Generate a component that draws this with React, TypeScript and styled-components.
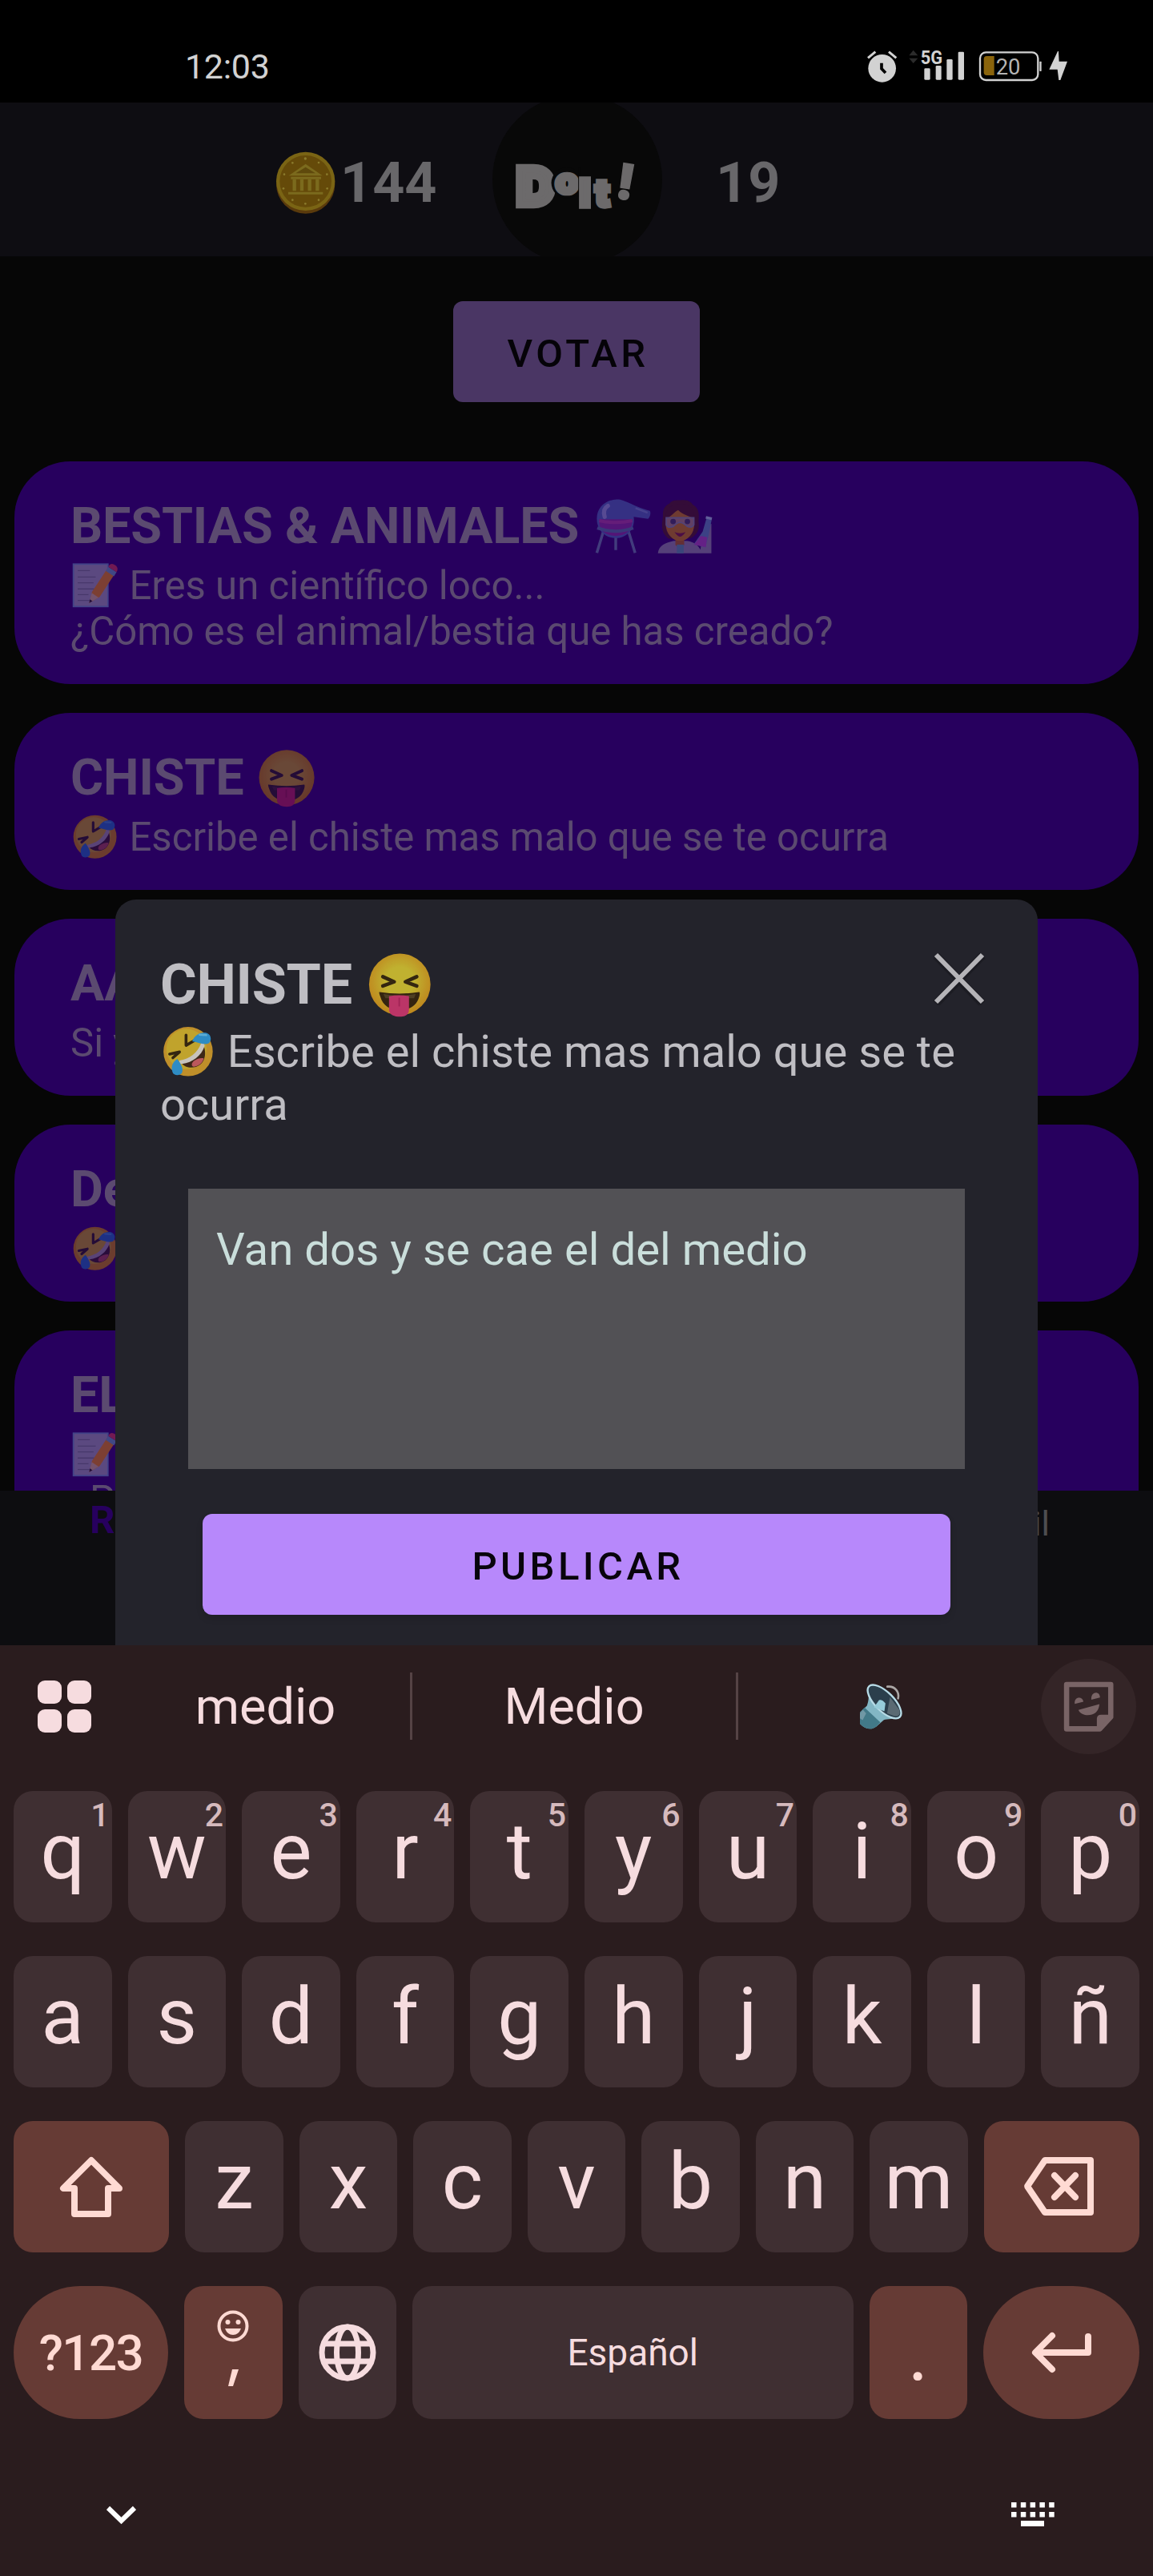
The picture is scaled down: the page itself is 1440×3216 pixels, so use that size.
import React from "react";
import styled, { createGlobalStyle } from "styled-components";

const GlobalStyle = createGlobalStyle`
  * { box-sizing: border-box; }
  body { margin: 0; background: #000; }
  button { border: 0; padding: 0; margin: 0; font-family: inherit; }
  h1, h2, p { margin: 0; }
`;

const Screen = styled.div`
  position: relative;
  width: 1440px;
  height: 3216px;
  overflow: hidden;
  display: flex;
  flex-direction: column;
  background: #060606;
  font-family: Roboto, "Noto Sans", sans-serif;
`;

/* ---------- status bar ---------- */

const StatusBar = styled.header`
  flex: 0 0 128px;
  display: flex;
  justify-content: space-between;
  padding: 57px 100px 0 231px;
  background: #000;
  color: #d2d2d2;
`;

const Clock = styled.span`
  font-size: 43px;
  line-height: 52px;
  letter-spacing: -0.3px;
`;

const StatusIcons = styled.div`
  display: flex;
  padding-top: 3px;
  svg { display: block; height: 45px; overflow: visible; }
`;

const AlarmIcon = () => (
  <svg width="40" height="45" viewBox="97 60 120 135">
    <circle cx="156" cy="136" r="52" fill="#d2d2d2" />
    <path d="M103 97L131 74M209 97L181 74" stroke="#d2d2d2" strokeWidth="9" />
    <path d="M154 116V137L169 153" fill="none" stroke="#000" strokeWidth="11" />
  </svg>
);

const SignalIcon = () => (
  <svg width="86" height="45" viewBox="217 60 258 135">
    <path d="M257 88L273 68L290 88zM257 98H290L273 117z" fill="#2b2b2b" />
    <rect x="314" y="136" width="22" height="43" rx="4" fill="#d2d2d2" />
    <rect x="357" y="126" width="21" height="53" rx="4" fill="#d2d2d2" />
    <rect x="398" y="102" width="22" height="77" rx="4" fill="#d2d2d2" />
    <rect x="441" y="74" width="22" height="105" rx="4" fill="#d2d2d2" />
    <text x="300" y="120" fontSize="74" fontWeight="700" textLength="82" lengthAdjust="spacingAndGlyphs" fill="#d2d2d2" stroke="#000" strokeWidth="3" paintOrder="stroke">5G</text>
  </svg>
);

const BatteryIcon = () => (
  <svg width="96" height="45" viewBox="475 60 288 135">
    <rect x="523" y="76" width="217" height="104" rx="22" fill="none" stroke="#d2d2d2" strokeWidth="7" />
    <path d="M576 90H548Q537 90 537 102V151Q537 162 548 162H576z" fill="#8a640c" />
    <rect x="746" y="110" width="7" height="37" rx="2" fill="#d2d2d2" />
    <text x="582" y="159" fontSize="82" fill="#b4b4b4">20</text>
  </svg>
);

const BoltIcon = () => (
  <svg width="36" height="45" viewBox="763 60 108 135">
    <path d="M814 72L782 140H813L818 180H824L850 110H819L817 72z" fill="#d2d2d2" />
  </svg>
);

/* ---------- app header ---------- */

const AppHeader = styled.div`
  flex: 0 0 192px;
  display: flex;
  align-items: center;
  overflow: hidden;
  padding-left: 340px;
  background: #0e0d12;
  color: #68676a;
`;

const Counter = styled.span<{ $width: number }>`
  width: ${(p) => p.$width}px;
  font-size: 70px;
  font-weight: 700;
  line-height: 82px;
  padding-top: 7px;
`;

const LogoDisc = styled.div`
  flex: 0 0 212px;
  height: 212px;
  margin-right: 67px;
  border-radius: 50%;
  background: #080808;
  display: flex;
  align-items: center;
  justify-content: center;
  padding: 12px 3px 0 0;
  svg { overflow: visible; }
`;

const CoinDrawing = styled.svg`
  margin: 7px 1px 0 0;
`;

const Coin = () => (
  <CoinDrawing width="84" height="84" viewBox="60 48 252 252">
    <circle cx="185" cy="180" r="110" fill="#5a3a0c" />
    <circle cx="185" cy="169" r="110" fill="#7a6414" />
    <circle cx="185" cy="169" r="97" fill="#654a09" />
    <path d="M122 148L185 104L248 148z" fill="#7b6a1d" />
    <path d="M148 139L185 116L222 139z" fill="#5f490c" />
    <path d="M130 157H243M120 214H250" stroke="#7b6a1d" strokeWidth="9" />
    <path d="M143 161V205M171 161V205M200 161V205M229 161V205" stroke="#7b6a1d" strokeWidth="13" />
    <g fill="#8a7a2c">
      <circle cx="184" cy="84" r="5" /><circle cx="136" cy="100" r="4" /><circle cx="234" cy="99" r="4" />
      <circle cx="105" cy="143" r="4" /><circle cx="265" cy="143" r="4" /><circle cx="102" cy="196" r="4" />
      <circle cx="266" cy="196" r="4" /><circle cx="136" cy="239" r="4" /><circle cx="234" cy="239" r="4" />
      <circle cx="184" cy="253" r="4" />
    </g>
  </CoinDrawing>
);

const Logo = () => (
  <svg width="153" height="65" viewBox="120 235 460 195" fontFamily="Inter, sans-serif" fontWeight="900">
    <g fill="#6c6a6b" stroke="#6c6a6b">
      <text x="127" y="408" fontSize="196" strokeWidth="25">D</text>
      <circle cx="315" cy="326" r="58" fill="#080808" stroke="none" />
      <text x="271" y="368" fontSize="138" textLength="89" lengthAdjust="spacingAndGlyphs" strokeWidth="14">o</text>
      <rect x="358" y="270" width="7" height="110" fill="#080808" stroke="none" />
      <text x="362" y="415" fontSize="146" strokeWidth="16">I</text>
      <text x="421" y="415" fontSize="142" strokeWidth="16">t</text>
      <text transform="translate(492 381) rotate(9)" fontSize="184" strokeWidth="4">!</text>
    </g>
  </svg>
);

/* ---------- feed ---------- */

const Feed = styled.main`
  flex: 0 0 1541px;
  overflow: hidden;
  display: flex;
  flex-direction: column;
  align-items: center;
  padding-top: 56px;
`;

const VoteButton = styled.button`
  flex: 0 0 126px;
  width: 308px;
  margin-bottom: 74px;
  padding: 4px 0 0 4px;
  border-radius: 12px;
  background: #4a3664;
  color: #050308;
  font-size: 49px;
  font-weight: 500;
  letter-spacing: 4.4px;
`;

const CardList = styled.div`
  display: flex;
  flex-direction: column;
  gap: 36px;
  width: 1404px;
`;

const Card = styled.article`
  padding: 43px 69px 37px 70px;
  border-radius: 70px;
  background: #27005e;
  color: #5b4a70;
`;

const CardTitle = styled.h2`
  font-size: 63px;
  line-height: 75px;
  font-weight: 700;
  letter-spacing: -0.15px;
  margin-bottom: 9px;
  white-space: nowrap;
`;

const CardBody = styled.p`
  font-size: 49.15px;
  line-height: 57px;
  white-space: pre-line;
`;

const Indented = styled.span`
  padding-left: 24px;
`;

/* ---------- emoji drawings ---------- */

const EmojiBox = styled.svg<{ $opacity?: number }>`
  width: 1.245em;
  height: 1.17em;
  margin: -6px 0 -3px;
  vertical-align: calc(-0.243em + 3px);
  overflow: visible;
  opacity: ${(p) => p.$opacity ?? 0.95};
`;

type EmojiProps = { dim?: boolean };

const Squint = ({ dim }: EmojiProps) => {
  const gradient = dim ? "squintFaceDim" : "squintFace";
  return (
    <EmojiBox viewBox="-2 0 136 128" $opacity={dim ? 0.75 : 0.95}>
      <defs>
        <radialGradient id={gradient} cx="50%" cy="45%" r="52%">
          <stop offset="0.45" stopColor={dim ? "#80602a" : "#c9b931"} />
          <stop offset="1" stopColor={dim ? "#7d4c1a" : "#c8901f"} />
        </radialGradient>
      </defs>
      <circle cx="64" cy="64" r="60" fill={`url(#${gradient})`} />
      <path d="M31 49L53 59L31 67M97 49L75 59L97 67" fill="none" stroke={dim ? "#23102a" : "#35270f"} strokeWidth="7" strokeLinecap="round" strokeLinejoin="round" />
      <path d="M24 79Q64 85 102 79Q104 80 102 88C97 106 83 114 64 114S31 106 26 88Q23 80 24 79z" fill={dim ? "#23102a" : "#35250f"} />
      <path d="M32 83Q64 88 95 83L92 91H36z" fill={dim ? "#301733" : "#514024"} />
      <path d="M43 87Q64 83 82 87V112C82 124 74 127 64 127S43 124 43 112z" fill={dim ? "#7d1453" : "#c4366b"} />
      <path d="M63 90V107" stroke={dim ? "#6a0f48" : "#a82658"} strokeWidth="3" />
    </EmojiBox>
  );
};

const Rofl = ({ dim }: EmojiProps) => (
  <EmojiBox viewBox="-4 0 136 128" $opacity={dim ? 0.75 : 0.95}>
    <circle cx="64" cy="64" r="60" fill={dim ? "#82501f" : "#c8952a"} />
    <circle cx="60" cy="58" r="49" fill={dim ? "#80602a" : "#c9aa2d"} />
    <path d="M59 24V49L81 36M19 70L43 65L27 79" fill="none" stroke={dim ? "#23102a" : "#35270f"} strokeWidth="7" strokeLinecap="round" strokeLinejoin="round" />
    <path d="M101 48C109 65 106 86 93 96S58 106 47 91C70 89 90 72 101 48z" fill={dim ? "#2c1030" : "#402818"} />
    <path d="M78 87C87 80 99 79 102 81C99 92 91 99 78 101C72 101 71 93 78 87z" fill={dim ? "#6e2a4c" : "#c45b5f"} />
    <path d="M96 43C87 68 68 82 43 86C42 90 44 95 49 94C76 90 96 74 104 51C105 46 101 42 96 43z" fill={dim ? "#6a5a80" : "#d0ccc4"} />
    <path d="M74 39C80 24 94 15 110 19C121 23 122 38 114 44C103 49 91 42 74 39z" fill={dim ? "#1a4191" : "#2f92cd"} />
    <path d="M38 82C28 88 21 99 26 114C29 123 43 124 49 116C54 105 45 93 38 82z" fill={dim ? "#1a4191" : "#2f92cd"} />
    <path d="M92 23L108 24" stroke={dim ? "#2c559c" : "#61b4db"} strokeWidth="5" strokeLinecap="round" />
  </EmojiBox>
);

const Memo = () => (
  <EmojiBox viewBox="-4 0 136 128" $opacity={0.6}>
    <rect x="4" y="5" width="96" height="118" fill="#7f7b98" stroke="#5470a4" strokeWidth="4" />
    <path d="M16 23H50M16 41H66M16 57H60M16 74H62M16 90H46M16 106H50" stroke="#5d5c74" strokeWidth="3" />
    <path d="M48 113L56 82L100 15L122 28L77 96z" fill="#b56a18" />
    <path d="M48 113L55 85L74 98z" fill="#a78a78" />
    <path d="M48 113L50 103L57 108z" fill="#1e1722" />
    <path d="M94 24L101 13L124 27L117 39z" fill="#5278a0" />
    <path d="M101 13C106 3 113 3 120 8C127 13 129 19 124 27z" fill="#a52c4c" />
  </EmojiBox>
);

const Alembic = () => (
  <EmojiBox viewBox="-4 0 136 128" $opacity={0.5}>
    <path d="M22 73L7 122M48 82V116M75 73L90 122" stroke="#5d789c" strokeWidth="6" />
    <path d="M50 6C66 5 80 18 122 31C125 35 122 46 118 48L87 44C91 70 71 90 48 90S7 72 7 48S25 7 50 6z" fill="#4460a8" />
    <path d="M12 49H84C85 72 71 85 48 85S10 72 12 49z" fill="#802a90" />
    <path d="M12 52Q48 60 84 52" fill="none" stroke="#a43a94" strokeWidth="7" />
    <path d="M24 44Q19 27 31 20" fill="none" stroke="#8794c8" strokeWidth="9" strokeLinecap="round" />
    <path d="M8 68Q48 82 86 68" fill="none" stroke="#4b6f96" strokeWidth="7" />
    <path d="M91 25L117 35" stroke="#6782bd" strokeWidth="4" />
  </EmojiBox>
);

const Scientist = () => (
  <EmojiBox viewBox="-4 0 136 128" $opacity={0.6}>
    <path d="M27 91C7 76 14 56 15 42C14 26 20 19 29 15C35 6 48 8 53 8C68 5 78 13 80 18C95 26 93 42 92 54C95 72 89 82 76 90z" fill="#3d1420" />
    <path d="M4 123C6 105 21 100 38 96H67C82 98 91 105 96 115L106 63L120 59V123z" fill="#746c8c" />
    <path d="M42 86H61V105L51 113L42 105z" fill="#8d4f1a" />
    <ellipse cx="52" cy="59" rx="31" ry="37" fill="#9f6314" />
    <path d="M20 48C33 44 42 31 48 29C58 40 76 43 84 48C82 20 69 15 51 16S20 25 20 48z" fill="#3d1420" />
    <path d="M22 46H82V61Q78 69 67 64Q58 56 51 56Q45 57 37 65Q25 69 22 61z" fill="#8a6c68" stroke="#6c6f8c" strokeWidth="3" />
    <circle cx="37" cy="54" r="6" fill="#393056" /><circle cx="68" cy="54" r="6" fill="#393056" />
    <path d="M40 77Q52 82 64 77Q57 87 52 87T40 77z" fill="#641736" />
    <path d="M45 104H60V123H45z" fill="#48758e" />
    <path d="M110 45L121 48L114 84L107 110L82 103L101 76z" fill="#4b6da0" />
    <path d="M97 85L111 88L108 110L82 104z" fill="#8d37a2" />
    <path d="M108 45L121 48" stroke="#8a9ec2" strokeWidth="6" />
  </EmojiBox>
);

/* ---------- bottom tabs ---------- */

const TabBar = styled.nav`
  flex: 0 0 193px;
  display: flex;
  justify-content: space-between;
  align-items: flex-start;
  padding: 8px 129px 0 112px;
  background: #0d0d10;
`;

const Tab = styled.span<{ $active?: boolean }>`
  font-size: ${(p) => (p.$active ? 49 : 43)}px;
  line-height: 57px;
  padding-top: ${(p) => (p.$active ? 0 : 5)}px;
  font-weight: ${(p) => (p.$active ? 700 : 400)};
  color: ${(p) => (p.$active ? "#27005e" : "#4d4d50")};
`;

/* ---------- dialog ---------- */

const Dialog = styled.section`
  position: absolute;
  top: 1123px;
  left: 144px;
  width: 1152px;
  height: 931px;
  padding: 64px 56px 0;
  border-radius: 26px 26px 0 0;
  background: #23232b;
  color: #bfbec3;
`;

const DialogHeader = styled.div`
  display: flex;
  justify-content: space-between;
  align-items: flex-start;
  height: 93px;
  padding-right: 9px;
`;

const DialogTitle = styled.h1`
  font-size: 70px;
  line-height: 83px;
  font-weight: 700;
  letter-spacing: -0.3px;
  padding-top: 1px;
`;

const CloseIcon = () => (
  <svg width="66" height="68" viewBox="0 0 66 68">
    <path d="M4 6L62 66M62 6L4 66" stroke="#17171c" strokeWidth="10" opacity="0.5" />
    <path d="M4 5L62 64M62 5L4 64" stroke="#b5b4b8" strokeWidth="6" />
  </svg>
);

const DialogText = styled.p`
  font-size: 56.1px;
  line-height: 66px;
`;

const AnswerBox = styled.div`
  width: 970px;
  height: 350px;
  margin: 72px 0 56px 35px;
  padding: 43px 35px;
  background: #525155;
  color: #cadedb;
  font-size: 56.35px;
  line-height: 66px;
`;

const PublishButton = styled.button`
  display: block;
  width: 934px;
  height: 126px;
  margin-left: 53px;
  padding: 4px 0 0 4px;
  border-radius: 12px;
  background: #b788fb;
  box-shadow: 0 5px 8px rgba(0, 0, 0, 0.12);
  color: #08040c;
  font-size: 49px;
  font-weight: 500;
  letter-spacing: 4.4px;
`;

/* ---------- keyboard ---------- */

const Keyboard = styled.section`
  position: relative;
  flex: 1;
  display: flex;
  flex-direction: column;
  padding: 0 17px;
  background: #2a1c1e;
  color: #f6dcdf;
`;

const SuggestionStrip = styled.div`
  flex: 0 0 182px;
  display: flex;
  align-items: center;
  padding-bottom: 30px;
  padding-left: 30px;
`;

const Suggestion = styled.div<{ $width: number; $divider?: boolean }>`
  width: ${(p) => p.$width}px;
  height: 84px;
  display: flex;
  align-items: center;
  justify-content: center;
  padding-top: 1px;
  font-size: 63px;
  border-right: ${(p) => (p.$divider ? "3px solid #554345" : "0")};
`;

const AppsIcon = styled.div`
  display: grid;
  grid-template-columns: 30px 30px;
  gap: 7px;
  margin-right: 37px;
  i { height: 29px; border-radius: 9px; background: #f6dcdf; }
`;

const StickerButton = styled.div`
  width: 119px;
  height: 119px;
  margin-left: 24px;
  border-radius: 50%;
  background: #342527;
  display: flex;
  align-items: center;
  justify-content: center;
`;

const SpeakerIcon = () => (
  <svg width="57" height="62" viewBox="60 95 170 185">
    <path d="M69 208L95 183C103 160 102 145 99 127L215 229C196 232 171 231 158 236L131 260C112 276 87 270 69 250z" fill="#82b6c4" />
    <path d="M69 208L86 190L145 245L131 260C112 276 87 270 69 250z" fill="#427988" />
    <path d="M69 211L80 198L92 211L79 237L69 230z" fill="#7098a5" />
    <ellipse cx="160" cy="168" rx="81" ry="35" transform="rotate(45 160 168)" fill="#2b3f4c" stroke="#b7dbe6" strokeWidth="7" />
    <path d="M181 151L215 197C221 215 213 225 196 221L170 211z" fill="#5a6a73" />
    <path d="M121 189L140 162Q151 158 164 174L160 204z" fill="#96ccd9" />
    <path d="M171 112C199 108 217 132 211 156" fill="none" stroke="#aaa6a5" strokeWidth="8" strokeLinecap="round" />
  </svg>
);

const StickerIcon = () => (
  <svg width="66" height="65" viewBox="828 80 200 198">
    <path d="M843 95H1011V219L969 264H843z" fill="none" stroke="#796466" strokeWidth="20" strokeLinejoin="round" />
    <path d="M958 255V226Q958 210 975 210H1014L968 260z" fill="#796466" />
    <path d="M874 169C870 139 905 139 907 161zM937 153C935 120 970 119 970 145zM888 192L968 170C965 201 946 212 924 212C904 212 892 202 888 192z" fill="#796466" />
  </svg>
);

const KeyRow = styled.div<{ $tall?: boolean }>`
  flex: 0 0 ${(p) => (p.$tall ? 166 : 164)}px;
  display: flex;
  justify-content: space-between;
  column-gap: 20px;
  margin-bottom: ${(p) => (p.$tall ? 0 : 42)}px;
`;

const Key = styled.div<{ $special?: boolean; $grow?: boolean; $pill?: boolean; $basis?: number }>`
  position: relative;
  flex: ${(p) => (p.$grow ? "1 1 0" : `0 0 ${p.$basis ?? 122.5}px`)};
  display: flex;
  align-items: center;
  justify-content: center;
  border-radius: ${(p) => (p.$pill ? 83 : 24)}px;
  background: ${(p) => (p.$special ? "#663b35" : "#3f2f32")};
  color: ${(p) => (p.$special ? "#ffdad3" : "#f6dcdf")};
`;

const Letter = styled.span`
  font-size: 98px;
  line-height: 115px;
  padding-bottom: 13px;
`;

const Hint = styled.span`
  position: absolute;
  top: 6px;
  right: 3px;
  font-size: 41px;
  line-height: 48px;
  font-weight: 500;
  color: #d6babd;
`;

const ModeLabel = styled.span`
  font-size: 62px;
  font-weight: 500;
  letter-spacing: -1.6px;
`;

const SpaceLabel = styled.span`
  font-size: 46px;
`;

const CommaStack = styled.div`
  height: 100%;
  display: flex;
  flex-direction: column;
  align-items: center;
  padding-top: 30px;
  gap: 34px;
`;

const Period = styled.span`
  font-size: 98px;
  line-height: 115px;
  padding-top: 1px;
`;

const NavRow = styled.div`
  flex: 1;
  display: flex;
  justify-content: space-between;
  align-items: flex-start;
  padding: 94px 105px 0 114px;
`;

const ShiftIcon = () => (
  <svg width="84" height="80" viewBox="0 0 84 80">
    <path d="M42 7L7 42H21V74H63V42H77z" fill="none" stroke="#ffdad3" strokeWidth="8" strokeLinejoin="round" />
  </svg>
);

const BackspaceDrawing = styled.svg`
  margin-right: 7px;
`;

const BackspaceIcon = () => (
  <BackspaceDrawing width="92" height="78" viewBox="0 0 92 78">
    <path d="M29 6H86V71H29L7 38.5z" fill="none" stroke="#ffdad3" strokeWidth="8" strokeLinejoin="round" />
    <path d="M41 25L67 52M67 25L41 52" stroke="#ffdad3" strokeWidth="8" strokeLinecap="round" />
  </BackspaceDrawing>
);

const SmileIcon = () => (
  <svg width="40" height="40" viewBox="0 0 40 40">
    <circle cx="20" cy="20" r="17.5" fill="none" stroke="#ffdad3" strokeWidth="4" />
    <circle cx="13.5" cy="15" r="3" fill="#ffdad3" /><circle cx="26.5" cy="15" r="3" fill="#ffdad3" />
    <path d="M10 23H30Q27 31 20 31T10 23z" fill="#ffdad3" />
  </svg>
);

const CommaIcon = () => (
  <svg width="14" height="22" viewBox="0 0 14 22">
    <path d="M6 0H14L7 21H1z" fill="#ffdad3" />
  </svg>
);

const GlobeIcon = () => (
  <svg width="72" height="72" viewBox="0 0 72 72">
    <g fill="none" stroke="#f6dcdf" strokeWidth="7">
      <circle cx="36" cy="36" r="32" />
      <ellipse cx="36" cy="36" rx="13.5" ry="32" />
      <path d="M6 25H66M6 47H66" />
    </g>
  </svg>
);

const EnterIcon = () => (
  <svg width="78" height="52" viewBox="0 0 78 52">
    <path d="M27 5L6 26L27 47M7 26H72V6" fill="none" stroke="#ffdad3" strokeWidth="8" strokeLinecap="round" strokeLinejoin="round" />
  </svg>
);

const ChevronIcon = () => (
  <svg width="41" height="50" viewBox="0 0 41 50">
    <path d="M4 17L20.5 33L37 17" fill="none" stroke="#fff" strokeWidth="6" />
  </svg>
);

const KeyboardIcon = () => (
  <svg width="56" height="44" viewBox="0 0 56 44">
    {[0, 1, 2, 3, 4].map((i) => (
      <g key={i} fill="#fff">
        <rect x={1 + i * 11.8} y="10" width="6.5" height="6.5" />
        <rect x={1 + i * 11.8} y="22" width="6.5" height="6.5" />
      </g>
    ))}
    <rect x="13" y="33" width="29" height="7" fill="#fff" />
  </svg>
);

const topKeys = "qwertyuiop".split("");
const homeKeys = "asdfghjklñ".split("");
const bottomKeys = "zxcvbnm".split("");

export default function App() {
  return (
    <Screen>
      <GlobalStyle />
      <StatusBar>
        <Clock>12:03</Clock>
        <StatusIcons>
          <AlarmIcon />
          <SignalIcon />
          <BatteryIcon />
          <BoltIcon />
        </StatusIcons>
      </StatusBar>
      <AppHeader>
        <Coin />
        <Counter $width={190}>144</Counter>
        <LogoDisc>
          <Logo />
        </LogoDisc>
        <Counter $width={90}>19</Counter>
      </AppHeader>
      <Feed>
        <VoteButton>VOTAR</VoteButton>
        <CardList>
          <Card>
            <CardTitle>BESTIAS &amp; ANIMALES <Alembic /><Scientist /></CardTitle>
            <CardBody><Memo /> Eres un científico loco...{"\n"}¿Cómo es el animal/bestia que has creado?</CardBody>
          </Card>
          <Card>
            <CardTitle>CHISTE <Squint dim /></CardTitle>
            <CardBody><Rofl dim /> Escribe el chiste mas malo que se te ocurra</CardBody>
          </Card>
          <Card>
            <CardTitle>AA</CardTitle>
            <CardBody>Si y</CardBody>
          </Card>
          <Card>
            <CardTitle>De</CardTitle>
            <CardBody><Rofl dim /></CardBody>
          </Card>
          <Card>
            <CardTitle>EL</CardTitle>
            <CardBody><Memo />{"\n"}<Indented>P</Indented></CardBody>
          </Card>
        </CardList>
      </Feed>
      <TabBar>
        <Tab $active>R</Tab>
        <Tab>il</Tab>
      </TabBar>
      <Keyboard>
        <SuggestionStrip>
          <AppsIcon><i /><i /><i /><i /></AppsIcon>
          <Suggestion $width={364} $divider>medio</Suggestion>
          <Suggestion $width={407} $divider>Medio</Suggestion>
          <Suggestion $width={354}><SpeakerIcon /></Suggestion>
          <StickerButton><StickerIcon /></StickerButton>
        </SuggestionStrip>
        <KeyRow>
          {topKeys.map((k, i) => (
            <Key key={k}><Letter>{k}</Letter><Hint>{(i + 1) % 10}</Hint></Key>
          ))}
        </KeyRow>
        <KeyRow>
          {homeKeys.map((k) => <Key key={k}><Letter>{k}</Letter></Key>)}
        </KeyRow>
        <KeyRow>
          <Key $special $grow><ShiftIcon /></Key>
          {bottomKeys.map((k) => <Key key={k}><Letter>{k}</Letter></Key>)}
          <Key $special $grow><BackspaceIcon /></Key>
        </KeyRow>
        <KeyRow $tall>
          <Key $special $pill $basis={193}><ModeLabel>?123</ModeLabel></Key>
          <Key $special><CommaStack><SmileIcon /><CommaIcon /></CommaStack></Key>
          <Key><GlobeIcon /></Key>
          <Key $grow><SpaceLabel>Español</SpaceLabel></Key>
          <Key $special><Period>.</Period></Key>
          <Key $special $pill $basis={195}><EnterIcon /></Key>
        </KeyRow>
        <NavRow>
          <ChevronIcon />
          <KeyboardIcon />
        </NavRow>
      </Keyboard>
      <Dialog>
        <DialogHeader>
          <DialogTitle>CHISTE <Squint /></DialogTitle>
          <CloseIcon />
        </DialogHeader>
        <DialogText><Rofl /> Escribe el chiste mas malo que se te ocurra</DialogText>
        <AnswerBox>Van dos y se cae el del medio</AnswerBox>
        <PublishButton>PUBLICAR</PublishButton>
      </Dialog>
    </Screen>
  );
}
